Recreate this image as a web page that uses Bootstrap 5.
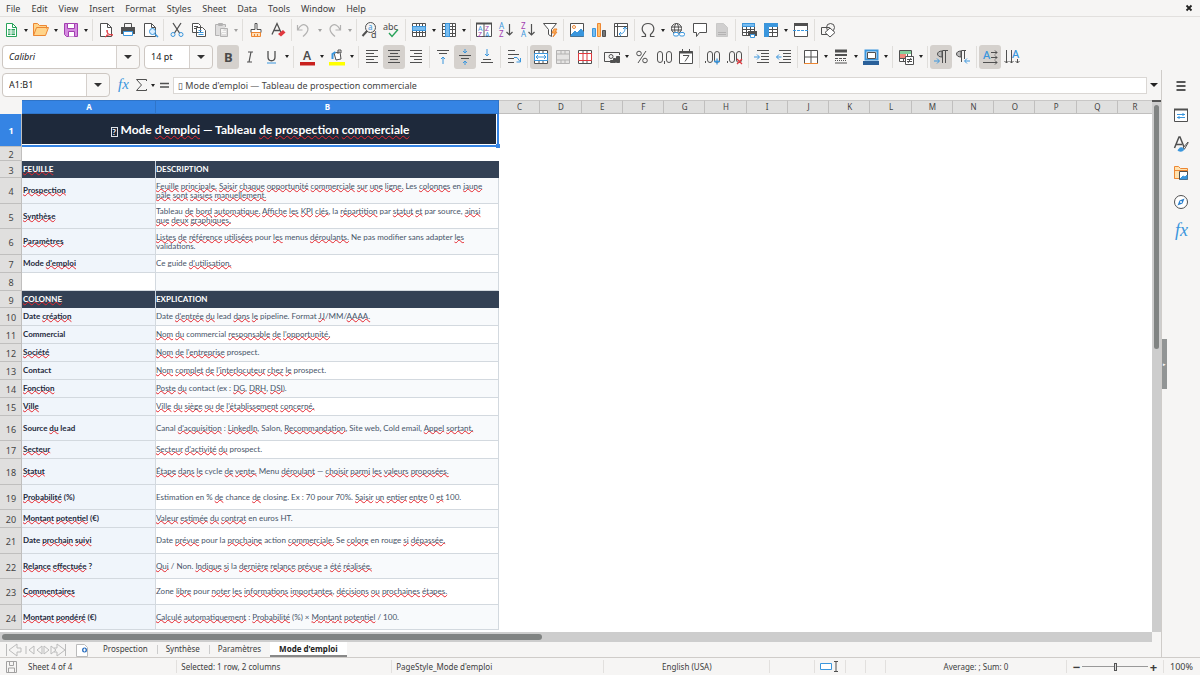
<!DOCTYPE html>
<html lang="en">
<head>
<meta charset="utf-8">
<meta name="viewport" content="width=device-width, initial-scale=1">
<title>Mode d'emploi - Spreadsheet</title>
<link href="https://cdn.jsdelivr.net/npm/bootstrap@5.3.0/dist/css/bootstrap.min.css" rel="stylesheet">
<style>
:root{--ui:#f6f5f4;--line:#e2e0de;--ink:#3d3d3d;--sel:#3584e4;--b:#3a96dd}
body{background:var(--ui);color:var(--ink);font:9px/14px "Noto Sans",sans-serif}
button,input,select{font:inherit;color:inherit}
.menubar{height:16px;line-height:17px;padding-left:6px}
.menubar a{color:inherit;text-decoration:none;margin-right:11px}
.menubar .tool{height:16px}
.menubar .tool svg{height:16px;margin:0}
.toolrow{height:27px}
.standard{border-top:1px solid var(--line)}
.formatting{padding-left:2px;gap:0}
.tool,.dd{border:0;background:none;padding:0;height:24px;flex:none}
.tool{width:22px;border-radius:3px}
.tool.active{background:#d5d1cd}
.tool svg{display:block;width:22px;height:22px;margin:1px 0}
.tool.slim,.tool.slim svg{width:14px}
.tool:disabled,.dd:disabled{opacity:.4}
svg{fill:none;stroke:#505050;stroke-width:1}
svg text{stroke:none;fill:#4a4a4a;font-family:"Noto Sans",sans-serif}
.blue{stroke:var(--b)}.red{stroke:#e0383e}.or{stroke:#ed8733}.gr{stroke:#29a35a}.pu{stroke:#a33fb0}
svg .tb{fill:var(--b)}svg .tp{fill:#a33fb0}
svg .fxglyph{font-family:"Liberation Serif",serif;font-style:italic}
.pale{stroke:#bbb}
.dd{width:8px}
.dd::before,.fold::before{content:"";display:block;width:4px;margin:0 auto;border:2px solid transparent;border-top:3px solid #222;border-bottom:0}
.split{width:1px;height:22px;background:#e0dedb;margin:0 2px;flex:none}
.combo{appearance:none;height:24px;border:1px solid #cdc7c2;border-radius:4px;padding:0 4px 0 6px;color:#222;flex:none;
background:linear-gradient(#d5d0cc,#d5d0cc) right 22px top/1px 100% no-repeat,url("data:image/svg+xml,%3Csvg xmlns='http://www.w3.org/2000/svg' width='22' height='22'%3E%3Cpath d='M7 9h8l-4 4z' fill='%23333'/%3E%3C/svg%3E") right center no-repeat,linear-gradient(90deg,#fff,#fff) left/calc(100% - 23px) 100% no-repeat,#f8f7f6}
.fontbox{width:138px;font-style:italic;margin-right:4px}.sizebox{width:69px;margin-right:4px}.namebox{width:108px;margin-right:3px}
.formula{height:30px;padding-left:2px}
.formula .entry{height:17px;border:1px solid #dad7d4;background:#fff;padding:0 4px;margin-left:2px;min-width:0;outline:0;color:#444}
.fold{border:0;background:none;width:14px;padding:0}
.fold::before{width:8px;border-width:4px 4px 0}
.shrinkable{min-height:0;min-width:0}
.sheet{background:#fff;overflow:hidden;min-height:0}
.cells{table-layout:fixed;width:100%;border-collapse:separate;border-spacing:0;font-family:Lato,sans-serif;font-size:8px;line-height:9px;color:#475569}
.cells th,.cells td{padding:0 0 0 1px;vertical-align:middle;overflow:hidden;white-space:nowrap}
.cells thead th{height:14px;line-height:12px;background:#e0e0df;border-right:1px solid #c0bfbe;border-top:1px solid #c8c7c6;border-bottom:1px solid #c0bfbe;font-family:"Noto Sans",sans-serif;font-size:8px;font-weight:400;text-align:center;color:#444}
.cells thead th.on{background:var(--sel);color:#fff;font-weight:700;border-color:#2f74c8}
.cells thead th:first-child{background:var(--ui);border-color:transparent}
.cells thead th:last-child{border-right:0;padding-left:6px}
.cells .num{background:#e0dfde;border-right:1px solid #c0bfbe;border-bottom:1px solid #c0bfbe;font-family:"Noto Sans",sans-serif;font-size:9px;font-weight:400;text-align:center;color:#444;padding-top:2px}
.cells .num.on{background:var(--sel);color:#fff;font-weight:700;padding-top:0}
.cells .key{background:#f0f5fb;color:#1e293b;font-weight:700}
.cells .key,.cells .note{border-right:1px solid #d3d9df;border-bottom:1px solid #d3d9df}
.cells .note,.cells th:last-child:not(.num){padding-left:0}
.cells tr:nth-child(even) .note{background:#f8fafc}
.cells .band th:not(.num){background:#334155;color:#fff;font-weight:700;border-right:1px solid #cbd5e1}
.cells .band th:last-child{border-right-color:#334155!important}
.cells .title{position:relative;overflow:visible;background:#1e293b;color:#fff;font-size:12px;line-height:15px;font-weight:700;text-align:center;border-bottom:2px solid var(--sel);border-right:2px solid var(--sel);box-shadow:inset 0 -1px #fff,inset -1px 0 #fff}
.cells .title::after{content:"";position:absolute;right:-3px;bottom:-3px;width:4px;height:4px;background:var(--sel)}
.h14{height:14px}.h17{height:17px}.h18{height:18px}.h25{height:25px}.h26{height:26px}.h33{height:33px}
.cells u{text-decoration:underline wavy #e5262e 1px;text-decoration-skip-ink:none;text-underline-offset:-1px}
.cells .title u{text-underline-offset:1px}
.missing{display:inline-block;border:1px solid #dfe3e8;width:7px;height:10px;font-size:8px;line-height:8px;vertical-align:-1px}
.vtrack{width:9px;background:#cdcdcd;flex:none;border-top:2px solid #555}
.vthumb{width:5px;height:46%;margin:3px auto 0;border-radius:3px;background:#808382}
.htrack{height:10px;background:#cdcdcd;margin-right:9px;padding:2px}
.hthumb{width:47%;height:6px;border-radius:3px;background:#808382}
.tabs{height:15px;font-size:8px;line-height:14px}
.tabs .nav-link{padding:0 9px;color:inherit}
.tabs .nav-item+.nav-item{background:linear-gradient(#ccc,#ccc) left center/1px 9px no-repeat}
.tabs .nav-item .active{background:#fff;font-weight:700;color:#222;border-bottom:2px solid #888;height:15px}
.side{width:39px;border-left:1px solid #cfccc9;padding-top:1px}
.side .tool{height:29px}
.side .tool svg{margin:auto}
.grip{position:absolute;left:0;top:269px;width:5px;height:50px;background:#929595;border:0;padding:0;color:#fff;font-size:5px}
.status{height:18px;border-top:1px solid #cfccc9;font-size:8px;display:grid;grid-template-columns:20px 157fr 216fr 213fr 167fr 45fr 31fr 20fr 20fr 182fr auto auto}
.status .cellbox{border-left:1px solid #e2e0de;height:13px;line-height:13px;white-space:nowrap;min-width:0}
.status .percent{font-size:9px;padding:0 7px 0 6px}
.zoomer{appearance:none;height:9px;width:66px;background:linear-gradient(#999,#999) center/100% 1px no-repeat}
.zoomer::-webkit-slider-thumb{appearance:none;width:3px;height:8px;border:1px solid #555;background:#ddd}
.zbtn{border:0;background:none;padding:0;width:11px;font-size:13px;font-weight:700;line-height:12px}
</style>
</head>
<body class="vh-100 d-flex flex-column overflow-hidden">
<nav class="menubar d-flex flex-shrink-0" aria-label="Menu">
<a href="#">File</a><a href="#">Edit</a><a href="#">View</a><a href="#">Insert</a><a href="#">Format</a><a href="#">Styles</a><a href="#">Sheet</a><a href="#">Data</a><a href="#">Tools</a><a href="#">Window</a><a href="#">Help</a>
<button class="tool ms-auto" aria-label="Close document"><svg viewBox="0 0 22 16"><path d="M8.500 5.500l5 5m0-5l-5 5" stroke="#222" stroke-width="1.800"/></svg></button>
</nav>
<div class="toolrow standard d-flex align-items-center flex-shrink-0" role="toolbar" aria-label="Standard">
<button class="tool" aria-label="New"><svg viewBox="0 0 22 22"><path class="gr" d="M6.500 4.500h6l4 4v9h-10z" fill="#fff"/><path class="gr" d="M12.500 4.500v4h4"/><path d="M8 10h7v6H8z" fill="#29a35a" stroke="none"/><path d="M8 12h7M8 14h7M11 10v6" stroke="#fff"/></svg></button><button class="dd" aria-label="New options"></button>
<button class="tool" aria-label="Open"><svg viewBox="0 0 22 22"><path class="or" d="M3.500 16.500v-12h4l2 2h7v3M3.500 16.500l3-8h12l-3 8z" fill="#ffd48a"/></svg></button><button class="dd" aria-label="Open options"></button>
<button class="tool" aria-label="Save"><svg viewBox="0 0 22 22"><path class="pu" d="M4.500 4.500h13v13h-11l-2-2z" fill="#d58be0"/><path class="pu" d="M7.500 4.500h7v5h-7zM8.500 17.500v-5h6v5" fill="#fff"/></svg></button><button class="dd" aria-label="Save options"></button><i class="split"></i>
<button class="tool" aria-label="Export as PDF"><svg viewBox="0 0 22 22"><path d="M5.500 4.500h7l4 4v9h-11z" fill="#fff"/><path d="M12.500 4.500v4h4"/><path class="red" d="M10 18c3-2 3-5 2-7-1 3 2 5 6 5-3-1-5 0-8 2"/></svg></button>
<button class="tool" aria-label="Print"><svg viewBox="0 0 22 22"><path d="M7.500 8V4.500h7V8"/><path d="M4 8h14v7H4z" fill="#505050" stroke="none"/><path class="blue" d="M6.500 12.500h9v4h-9z" fill="#fff"/></svg></button>
<button class="tool" aria-label="Print preview"><svg viewBox="0 0 22 22"><path d="M5.500 4.500h7l4 4v9h-11z" fill="#fff"/><path d="M12.500 4.500v4h4"/><circle class="blue" cx="13.500" cy="12.500" r="3" fill="#dcefff"/><path class="blue" d="M16 15l3 3" stroke-width="1.500"/></svg></button><i class="split"></i>
<button class="tool" aria-label="Cut"><svg viewBox="0 0 22 22"><path d="M7 4l6.500 10M15 4L8.500 14" stroke-width="1.300"/><circle class="blue" cx="7" cy="15.500" r="2"/><circle class="blue" cx="15" cy="15.500" r="2"/></svg></button>
<button class="tool" aria-label="Copy"><svg viewBox="0 0 22 22"><path d="M4.500 4.500h6l2 2v7h-8zM8.500 8.500h6l3 3v6h-9z" fill="#fff"/><path d="M6 7.500h4M6 9.500h2"/><path class="blue" d="M10.500 11.500h3M10.500 13.500h5M10.500 15.500h5"/></svg></button>
<button class="tool" aria-label="Paste" disabled><svg viewBox="0 0 22 22"><path d="M15.500 8V5.500h-10v11h4M8.500 4.500h4v2h-4zM10.500 9.500h7v8h-7z" fill="#bbb"/><path d="M12 12.500h4M12 14.500h4" stroke="#fff"/></svg></button><button class="dd" aria-label="Paste options" disabled></button><i class="split"></i>
<button class="tool" aria-label="Clone formatting"><svg viewBox="0 0 22 22"><path d="M10 4.500h2v6h4v3H6v-3h4z" fill="#fff"/><path class="or" d="M6.500 13.500h9v4h-9z" fill="#ffe0bb"/><path class="or" d="M9.500 15v2M12.500 15v2"/></svg></button>
<button class="tool" aria-label="Clear formatting"><svg viewBox="0 0 22 22"><path d="M5 15.500l5-11 4 9M7 11.500h6" stroke-width="1.300"/><path d="M11 15l5-4 2.500 2.500-4.500 4z" fill="#e0383e" stroke="none"/></svg></button><i class="split"></i>
<button class="tool" aria-label="Undo" disabled><svg viewBox="0 0 22 22"><path d="M3.500 6v5h5M4 10.500c2-4 5-6 8-4s3 6-3 11" stroke-width="1.200"/></svg></button><button class="dd" aria-label="Undo list" disabled></button>
<button class="tool" aria-label="Redo" disabled><svg viewBox="0 0 22 22"><path d="M16.500 6v5h-5M16 10.500c-2-4-5-6-8-4s-3 6 3 11" stroke-width="1.200"/></svg></button><button class="dd" aria-label="Redo list" disabled></button><i class="split"></i>
<button class="tool" aria-label="Find and replace"><svg viewBox="0 0 22 22"><circle cx="11.500" cy="8.500" r="5"/><path d="M8 12l-4.500 5" stroke-width="2"/><text class="tb" x="9" y="11" font-size="8">a</text><text x="12" y="19" font-size="9">d</text></svg></button>
<button class="tool" aria-label="Spelling"><svg viewBox="0 0 22 22"><text x="2" y="11" font-size="9">abc</text><path class="gr" d="M8 14l3 3.500 6-7" stroke-width="1.400"/></svg></button><i class="split"></i>
<button class="tool" aria-label="Row"><svg viewBox="0 0 22 22"><path d="M4.500 4.500h13v13h-13zM4 13.500h14M8.500 4v14M11.500 4v14M14.500 4v14" fill="#fff"/><path class="blue" d="M4.500 7.500h13v4h-13z" fill="#79bdf0"/></svg></button><button class="dd" aria-label="Row options"></button>
<button class="tool" aria-label="Column"><svg viewBox="0 0 22 22"><path d="M4.500 4.500h13v13h-13zM4 7.500h14M4 10.500h14M4 14.500h14M14.500 4v14" fill="#fff"/><path class="blue" d="M7.500 4.500h4v13h-4z" fill="#79bdf0"/></svg></button><button class="dd" aria-label="Column options"></button><i class="split"></i>
<button class="tool" aria-label="Sort"><svg viewBox="0 0 22 22"><path d="M3.500 4.500h15v13h-15zM11 5v13" fill="#fff"/><path d="M3 4.500h16" stroke-width="2"/><text class="tb" x="5" y="12" font-size="7">A</text><text class="tp" x="5" y="18" font-size="7">Z</text><text class="tp" x="12" y="12" font-size="7">Z</text><text class="tb" x="12" y="18" font-size="7">A</text></svg></button>
<button class="tool" aria-label="Sort ascending"><svg viewBox="0 0 22 22"><text class="tb" x="4" y="10" font-size="8">A</text><text class="tp" x="4" y="18" font-size="8">Z</text><path d="M14.500 5v11M11.500 13l3 3 3-3" stroke-width="1.200"/></svg></button>
<button class="tool" aria-label="Sort descending"><svg viewBox="0 0 22 22"><text class="tp" x="4" y="10" font-size="8">Z</text><text class="tb" x="4" y="18" font-size="8">A</text><path d="M14.500 5v11M11.500 13l3 3 3-3" stroke-width="1.200"/></svg></button>
<button class="tool" aria-label="AutoFilter"><svg viewBox="0 0 22 22"><path d="M4.500 4.500h13l-5 6v7l-3-2v-5z" fill="#fff"/><path class="or" d="M15 10l-2 4h3l-2 4 4-5h-2l2-3z" fill="#ffb35c"/></svg></button><i class="split"></i>
<button class="tool" aria-label="Insert image"><svg viewBox="0 0 22 22"><path d="M4.500 4.500h13v13h-13z" fill="#fff"/><circle class="or" cx="8" cy="8" r="1.500"/><path class="blue" d="M5 16l4-4 2 2 4-4 2.500 3v4H5z" fill="#3a96dd"/></svg></button>
<button class="tool" aria-label="Insert chart"><svg viewBox="0 0 22 22"><path class="blue" d="M4.500 9.500h3v8h-3z" fill="#79bdf0"/><path class="or" d="M9.500 4.500h3v13h-3z" fill="#ffc06e"/><path d="M14.500 11.500h3v6h-3z" fill="#777"/></svg></button>
<button class="tool" aria-label="Pivot table"><svg viewBox="0 0 22 22"><path d="M4.500 4.500h13v13h-13zM4 7.500h14M7.500 4v14" fill="#fff"/><path class="blue" d="M9 15c4 0 6-2 6-6M13 10l2-2 2 2M11 13l-2 2 2 2"/></svg></button><i class="split"></i>
<button class="tool" aria-label="Special character"><svg viewBox="0 0 22 22"><path d="M4.500 17.500h4v-2c-6-5-3-11 2.500-11s8.500 6 2.500 11v2h4" stroke-width="1.200"/></svg></button><button class="dd" aria-label="Character options"></button>
<button class="tool" aria-label="Hyperlink"><svg viewBox="0 0 22 22"><circle cx="9.500" cy="9.500" r="5"/><ellipse cx="9.500" cy="9.500" rx="2" ry="5"/><path d="M4 8h11M4 11h11"/><rect class="blue" x="6.500" y="13.500" width="5" height="3.500" rx="1.500" fill="#fff"/><rect class="blue" x="12.500" y="13.500" width="5" height="3.500" rx="1.500" fill="#fff"/></svg></button>
<button class="tool" aria-label="Comment"><svg viewBox="0 0 22 22"><path d="M4.500 4.500h13v9h-7l-3 4v-4h-3z" fill="#fff"/></svg></button>
<button class="tool" aria-label="Headers and footers" disabled><svg viewBox="0 0 22 22"><path d="M5.500 4.500h7l4 4v9h-11z" fill="#999" stroke="#888"/><path d="M7 13.500h8M7 15.500h8"/></svg></button><i class="split"></i>
<button class="tool" aria-label="Print area"><svg viewBox="0 0 22 22"><path d="M4.500 4.500h12v12h-12zM4 10.500h13M4 13.500h13M8.500 4v13M12.500 4v13" fill="#fff"/><path class="blue" d="M4.500 4.500h12v3h-12z" fill="#79bdf0"/><path d="M10 12h9v5h-9z" fill="#505050" stroke="none"/><path class="blue" d="M12.500 15.500h4v3h-4z" fill="#fff"/></svg></button>
<button class="tool" aria-label="Freeze"><svg viewBox="0 0 22 22"><path d="M4.500 4.500h13v13h-13zM4 10.500h14M4 13.500h14M12.500 4v14" fill="#fff"/><path class="blue" d="M4.500 4.500h13v3h-9v10h-4z" fill="#3a96dd"/></svg></button><button class="dd" aria-label="Freeze options"></button>
<button class="tool" aria-label="Split window"><svg viewBox="0 0 22 22"><path d="M4.500 5.500h13v12h-13z" fill="#fff"/><path d="M4 5.500h14" stroke-width="3"/><path class="blue" d="M3 11.500h16" stroke-dasharray="3 1"/></svg></button><i class="split"></i>
<button class="tool" aria-label="Draw functions"><svg viewBox="0 0 22 22"><path d="M4.500 8.500h8v7h-8z"/><circle cx="13.500" cy="8.500" r="4"/><path d="M13 9l5 4.500-5 4.500-5-4.500z" fill="#fff"/></svg></button>
</div>
<div class="toolrow formatting d-flex align-items-center flex-shrink-0" role="toolbar" aria-label="Formatting">
<select class="combo fontbox" aria-label="Font name"><option>Calibri</option></select>
<select class="combo sizebox" aria-label="Font size"><option>14 pt</option></select>
<button class="tool active" aria-label="Bold"><svg viewBox="0 0 22 22"><text x="7" y="16" font-size="13" font-weight="700">B</text></svg></button>
<button class="tool" aria-label="Italic"><svg viewBox="0 0 22 22"><path d="M9 6h5M8 16h5M12 6l-2 10" stroke-width="1.200"/></svg></button>
<button class="tool" aria-label="Underline"><svg viewBox="0 0 22 22"><path d="M7 5v6c0 5 7 5 7 0V5" stroke-width="1.300"/><path class="blue" d="M6 17h9"/></svg></button><button class="dd" aria-label="Underline options"></button><i class="split"></i>
<button class="tool" aria-label="Font color"><svg viewBox="0 0 22 22"><text x="7" y="14" font-size="12" font-weight="600">A</text><path d="M4 16h15v3.500H4z" fill="#c9211e" stroke="none"/></svg></button><button class="dd" aria-label="Font colors"></button>
<button class="tool" aria-label="Highlighting"><svg viewBox="0 0 22 22"><path d="M8 7l6-1 1 7-5 1z" fill="#fff"/><path class="blue" d="M6.500 13v-5l3-2" stroke-width="2"/><path d="M12 8V4h3v3"/><path d="M3 16h16v3.500H3z" fill="#ff0" stroke="none"/></svg></button><button class="dd" aria-label="Highlight colors"></button><i class="split"></i>
<button class="tool" aria-label="Align left"><svg viewBox="0 0 22 22"><path d="M5 4.500h12M5 7.500h8M5 10.500h12M5 13.500h8M5 16.500h12"/></svg></button>
<button class="tool active" aria-label="Center"><svg viewBox="0 0 22 22"><path d="M5 4.500h12M7 7.500h8M5 10.500h12M7 13.500h8M5 16.500h12"/></svg></button>
<button class="tool" aria-label="Align right"><svg viewBox="0 0 22 22"><path d="M5 4.500h12M9 7.500h8M5 10.500h12M9 13.500h8M5 16.500h12"/></svg></button><i class="split"></i>
<button class="tool" aria-label="Align top"><svg viewBox="0 0 22 22"><path d="M5 4.500h12M7 7.500h8"/><path class="blue" d="M11 18v-7M9 13l2-2 2 2"/></svg></button>
<button class="tool active" aria-label="Center vertically"><svg viewBox="0 0 22 22"><path d="M5 9.500h12M7 12.500h8"/><path class="blue" d="M11 3v4M9 5l2 2 2-2M11 19v-4M9 17l2-2 2 2"/></svg></button>
<button class="tool" aria-label="Align bottom"><svg viewBox="0 0 22 22"><path d="M7 13.500h8M5 16.500h12"/><path class="blue" d="M11 3v7M9 8l2 2 2-2"/></svg></button><i class="split"></i>
<button class="tool" aria-label="Wrap text"><svg viewBox="0 0 22 22"><path d="M5 4.500h7M5 8.500h11M5 12.500h6M5 16.500h6"/><path class="blue" d="M11 11.500h3l3 4M17.500 12v4h-4"/></svg></button><i class="split"></i>
<button class="tool active" aria-label="Merge and center"><svg viewBox="0 0 22 22"><path d="M4.500 4.500h13v13h-13zM9 4v4M13 4v4M9 14v4M13 14v4" fill="#fff"/><path class="blue" d="M4.500 7.500h13v7h-13zM6 11h10M8 9l-2 2 2 2M14 9l2 2-2 2" fill="#fff"/></svg></button>
<button class="tool" aria-label="Merge cells" disabled><svg viewBox="0 0 22 22"><path d="M4.500 4.500h13v13h-13zM4 8h14M4 14h14M9 4v4M13 4v4M9 14v4M13 14v4" fill="#ccc"/></svg></button>
<button class="tool" aria-label="Unmerge cells"><svg viewBox="0 0 22 22"><path d="M4.500 4.500h13v13h-13zM9 4v4M13 4v4M9 14v4M13 14v4" fill="#fff"/><path class="red" d="M4.500 7.500h13v7h-13zM9 8v7M13 8v7" fill="#fff"/></svg></button><i class="split"></i>
<button class="tool" aria-label="Currency"><svg viewBox="0 0 22 22"><path d="M18.500 9V6.500h-15v9h6"/><circle cx="10" cy="10.500" r="2"/><path d="M9.500 16.500v-2h3v2zM12.500 16.500v-4h2v4zM15.500 16.500v-6h3v6z" fill="#505050"/></svg></button><button class="dd" aria-label="Currency options"></button>
<button class="tool" aria-label="Percent"><svg viewBox="0 0 22 22"><circle cx="8" cy="7.500" r="2.300"/><circle cx="14" cy="14.500" r="2.300"/><path d="M15 5L7 17"/></svg></button>
<button class="tool" aria-label="Number"><svg viewBox="0 0 22 22"><rect x="4.500" y="5.500" width="5" height="11" rx="2.500"/><rect x="13.500" y="5.500" width="5" height="11" rx="2.500"/><path d="M11.500 15v3"/></svg></button>
<button class="tool" aria-label="Date"><svg viewBox="0 0 22 22"><path d="M4.500 5.500h13v12h-13zM7.500 3v3M14.500 3v3M8 9.500h6l-4 6" fill="#fff"/><path d="M4 6.500h14" stroke-width="2"/></svg></button><i class="split"></i>
<button class="tool" aria-label="Add decimal place"><svg viewBox="0 0 22 22"><path d="M3.500 15v2"/><rect x="5.500" y="5.500" width="5" height="11" rx="2.500"/><rect x="12.500" y="5.500" width="5" height="11" rx="2.500"/><path class="blue" d="M12 15.500h6M15 12.500v6" stroke-width="1.300"/></svg></button>
<button class="tool" aria-label="Delete decimal place"><svg viewBox="0 0 22 22"><path d="M3.500 15v2"/><rect x="5.500" y="5.500" width="5" height="11" rx="2.500"/><rect x="12.500" y="5.500" width="5" height="11" rx="2.500"/><path class="red" d="M13 13l5 5M18 13l-5 5" stroke-width="1.300"/></svg></button><i class="split"></i>
<button class="tool" aria-label="Increase indent"><svg viewBox="0 0 22 22"><path d="M6 4.500h12M10 7.500h8M10 10.500h8M10 13.500h8M6 16.500h12"/><path class="blue" d="M3 11h5M6 8.500l2.500 2.500L6 13.500"/></svg></button>
<button class="tool" aria-label="Decrease indent"><svg viewBox="0 0 22 22"><path d="M6 4.500h12M10 7.500h8M10 10.500h8M10 13.500h8M6 16.500h12"/><path class="blue" d="M8.500 11h-5M6 8.500L3.500 11 6 13.500"/></svg></button><i class="split"></i>
<button class="tool" aria-label="Borders"><svg viewBox="0 0 22 22"><path d="M4.500 17V4.500h13V17M11 4v13M4 11h14" fill="#fff"/><path class="or" d="M4 17.500h14"/></svg></button><button class="dd" aria-label="Border options"></button>
<button class="tool" aria-label="Border style"><svg viewBox="0 0 22 22"><path d="M5 5h12" stroke-width="3"/><path d="M5 9h12" stroke-width="2"/><path d="M5 12.500h12" stroke-dasharray="3 1"/><path d="M5 14.500h12" stroke-dasharray="1 1"/><path d="M5 17h12"/></svg></button><button class="dd" aria-label="Border styles"></button>
<button class="tool" aria-label="Border color"><svg viewBox="0 0 22 22"><path class="blue" d="M5.500 4.500h12v9h-12z" stroke-width="2"/><path d="M7.500 6.500h8v6h-8z" fill="#fff"/><path d="M3 15h16v4H3z" fill="#2a6099" stroke="none"/></svg></button><button class="dd" aria-label="Border colors"></button><i class="split"></i>
<button class="tool" aria-label="Conditional formatting"><svg viewBox="0 0 22 22"><path d="M4.500 4.500h12v11h-12zM4 12.500h12M8.500 4v12M12.500 4v12" fill="#fff"/><path d="M5 5h11v3H5z" fill="#83cf9c" stroke="none"/><path d="M5 8h6v4H5z" fill="#f08a7c" stroke="none"/><path d="M10.500 10.500h8v8h-8zM12 13.500h5M12 15.500h5M16 12l-3 5" fill="#fff"/></svg></button><button class="dd" aria-label="Conditional options"></button><i class="split"></i>
<button class="tool active" aria-label="Left-to-right"><svg viewBox="0 0 22 22"><path d="M12 5C6 5 6 11 12 11z" fill="#bbb"/><path d="M12.500 17V4.500H18M15.500 4v13"/><path class="blue" d="M4 15h5M7 12.500L9.500 15 7 17.500"/></svg></button>
<button class="tool" aria-label="Right-to-left"><svg viewBox="0 0 22 22"><path d="M9 5C3 5 3 11 9 11z" fill="#bbb"/><path d="M9.500 16V4.500H14M12.500 4v9"/><path class="blue" d="M18 15h-5M15 12.500L12.500 15l2.500 2.500"/></svg></button><i class="split"></i>
<button class="tool active" aria-label="Horizontal text"><svg viewBox="0 0 22 22"><text class="tb" x="4" y="13" font-size="11" font-weight="500">A</text><path d="M12 6.500h6M12 11.500h6M4 16.500h14M16 4.500l2 2-2 2M16 9.500l2 2-2 2M16 14.500l2 2-2 2"/></svg></button>
<button class="tool" aria-label="Vertical text"><svg viewBox="0 0 22 22"><text class="tb" x="11" y="12" font-size="11" font-weight="500">A</text><path d="M5.500 4v13M10.500 4v13M16.500 13v4M3.500 15l2 2 2-2M8.500 15l2 2 2-2M14.500 15l2 2 2-2"/></svg></button>
</div>
<main class="d-flex flex-grow-1 shrinkable">
<div class="d-flex flex-column flex-grow-1 shrinkable">
<div class="formula d-flex align-items-center flex-shrink-0">
<select class="combo namebox" aria-label="Name Box"><option>A1:B1</option></select>
<button class="tool" aria-label="Function wizard"><svg viewBox="0 0 22 22"><text class="tb fxglyph" x="5" y="15" font-size="15">fx</text></svg></button>
<button class="tool slim" aria-label="Sum"><svg viewBox="4 0 14 22"><path d="M15.500 7V5.500h-10l5 5.500-5 5.500h10V15"/></svg></button><button class="dd" aria-label="Sum options"></button>
<button class="tool slim" aria-label="Formula"><svg viewBox="4 0 14 22"><path d="M7 9.500h9M7 13h9" stroke-width="1.500"/></svg></button>
<input class="entry flex-grow-1" aria-label="Input line" value="▯ Mode d'emploi — Tableau de prospection commerciale">
<button class="fold" aria-label="Expand formula bar"></button>
</div>
<div class="d-flex flex-grow-1 shrinkable">
<div class="sheet flex-grow-1">
<table class="cells">
<colgroup><col style="width:22px"><col style="width:134px"><col style="width:343px"><col span="15"><col style="width:34px"></colgroup>
<thead><tr><th></th><th class="on">A</th><th class="on">B</th><th>C</th><th>D</th><th>E</th><th>F</th><th>G</th><th>H</th><th>I</th><th>J</th><th>K</th><th>L</th><th>M</th><th>N</th><th>O</th><th>P</th><th>Q</th><th>R</th></tr></thead>
<tbody>
<tr class="h33"><th class="num on">1</th><td class="title" colspan="2"><span class="missing">?</span> Mode <u>d'emploi</u> — Tableau <u>de</u> <u>prospection</u> <u>commerciale</u></td></tr>
<tr class="h14"><th class="num">2</th><td></td><td></td></tr>
<tr class="h17 band"><th class="num">3</th><th><u>FEUILLE</u></th><th>DESCRIPTION</th></tr>
<tr class="h26"><th class="num">4</th><td class="key"><u>Prospection</u></td><td class="note"><u>Feuille</u> <u>principale.</u> <u>Saisir</u> <u>chaque</u> <u>opportunité</u> <u>commerciale</u> <u>sur</u> <u>une</u> <u>ligne.</u> Les <u>colonnes</u> en <u>jaune</u><br><u>pâle</u> <u>sont</u> <u>saisies</u> <u>manuellement.</u></td></tr>
<tr class="h25"><th class="num">5</th><td class="key"><u>Synthèse</u></td><td class="note">Tableau <u>de</u> <u>bord</u> <u>automatique.</u> <u>Affiche</u> <u>les</u> <u>KPI</u> <u>clés</u>, la <u>répartition</u> par <u>statut</u> <u>et</u> par source, <u>ainsi</u><br><u>que</u> <u>deux</u> <u>graphiques.</u></td></tr>
<tr class="h26"><th class="num">6</th><td class="key"><u>Paramètres</u></td><td class="note"><u>Listes</u> <u>de</u> <u>référence</u> <u>utilisées</u> pour <u>les</u> menus <u>déroulants.</u> Ne pas modifier sans adapter <u>les</u><br>validations.</td></tr>
<tr class="h18"><th class="num">7</th><td class="key">Mode <u>d'emploi</u></td><td class="note">Ce guide <u>d'utilisation.</u></td></tr>
<tr class="h18"><th class="num">8</th><td class="key bg-white"></td><td class="note"></td></tr>
<tr class="h17 band"><th class="num">9</th><th><u>COLONNE</u></th><th>EXPLICATION</th></tr>
<tr class="h18"><th class="num">10</th><td class="key">Date <u>création</u></td><td class="note">Date <u>d'entrée</u> <u>du</u> lead <u>dans</u> <u>le</u> pipeline. Format <u>JJ</u>/MM/<u>AAAA.</u></td></tr>
<tr class="h18"><th class="num">11</th><td class="key">Commercial</td><td class="note"><u>Nom</u> <u>du</u> commercial <u>responsable</u> <u>de</u> <u>l'opportunité.</u></td></tr>
<tr class="h18"><th class="num">12</th><td class="key"><u>Société</u></td><td class="note"><u>Nom</u> <u>de</u> <u>l'entreprise</u> prospect.</td></tr>
<tr class="h18"><th class="num">13</th><td class="key">Contact</td><td class="note"><u>Nom</u> <u>complet</u> <u>de</u> <u>l'interlocuteur</u> <u>chez</u> <u>le</u> prospect.</td></tr>
<tr class="h18"><th class="num">14</th><td class="key"><u>Fonction</u></td><td class="note"><u>Poste</u> <u>du</u> contact (ex : <u>DG</u>, <u>DRH</u>, <u>DSI</u>).</td></tr>
<tr class="h18"><th class="num">15</th><td class="key"><u>Ville</u></td><td class="note"><u>Ville</u> <u>du</u> <u>siège</u> <u>ou</u> <u>de</u> <u>l'établissement</u> <u>concerné.</u></td></tr>
<tr class="h25"><th class="num">16</th><td class="key">Source <u>du</u> lead</td><td class="note">Canal <u>d'acquisition</u> : <u>LinkedIn</u>, Salon, <u>Recommandation</u>, Site web, Cold email, <u>Appel</u> <u>sortant.</u></td></tr>
<tr class="h18"><th class="num">17</th><td class="key"><u>Secteur</u></td><td class="note"><u>Secteur</u> <u>d'activité</u> <u>du</u> prospect.</td></tr>
<tr class="h26"><th class="num">18</th><td class="key"><u>Statut</u></td><td class="note"><u>Étape</u> <u>dans</u> <u>le</u> cycle <u>de</u> <u>vente.</u> Menu <u>déroulant</u> — <u>choisir</u> <u>parmi</u> <u>les</u> <u>valeurs</u> <u>proposées.</u></td></tr>
<tr class="h25"><th class="num">19</th><td class="key"><u>Probabilité</u> (%)</td><td class="note">Estimation en % <u>de</u> chance <u>de</u> closing. Ex : 70 pour 70%. <u>Saisir</u> <u>un</u> <u>entier</u> <u>entre</u> 0 <u>et</u> 100.</td></tr>
<tr class="h18"><th class="num">20</th><td class="key"><u>Montant</u> <u>potentiel</u> (€)</td><td class="note"><u>Valeur</u> <u>estimée</u> <u>du</u> <u>contrat</u> en euros HT.</td></tr>
<tr class="h26"><th class="num">21</th><td class="key">Date <u>prochain</u> <u>suivi</u></td><td class="note">Date <u>prévue</u> pour la <u>prochaine</u> action <u>commerciale.</u> Se <u>colore</u> en rouge <u>si</u> <u>dépassée.</u></td></tr>
<tr class="h25"><th class="num">22</th><td class="key"><u>Relance</u> <u>effectuée</u> ?</td><td class="note"><u>Oui</u> / Non. <u>Indique</u> <u>si</u> la <u>dernière</u> <u>relance</u> <u>prévue</u> a <u>été</u> <u>réalisée.</u></td></tr>
<tr class="h26"><th class="num">23</th><td class="key"><u>Commentaires</u></td><td class="note">Zone <u>libre</u> pour <u>noter</u> <u>les</u> <u>informations</u> <u>importantes</u>, <u>décisions</u> <u>ou</u> <u>prochaines</u> <u>étapes.</u></td></tr>
<tr class="h25"><th class="num">24</th><td class="key"><u>Montant</u> <u>pondéré</u> (€)</td><td class="note"><u>Calculé</u> <u>automatiquement</u> : <u>Probabilité</u> (%) × <u>Montant</u> <u>potentiel</u> / 100.</td></tr>
</tbody>
</table>
</div>
<div class="vtrack"><div class="vthumb"></div></div>
</div>
<div class="htrack flex-shrink-0"><div class="hthumb"></div></div>
<div class="tabs d-flex flex-shrink-0">
<button class="border-0 bg-transparent p-0 ms-1" disabled aria-label="Scroll sheets"><svg class="pale d-block" width="64" height="14" viewBox="0 0 64 14"><path d="M2.500 1v12M13 1L5 7l8 6V9h4V5h-4zM22 3v8M30 3l-5 4 5 4zM38 3l-5 4 5 4zM40 3l5 4-5 4zM47 3l5 4-5 4zM50 5h3V1l8 6-8 6V9h-3M61.500 1v12"/></svg></button>
<button class="border-0 bg-transparent p-0 ms-2 me-1" aria-label="Add sheet"><svg class="d-block" width="14" height="14" viewBox="0 0 14 14"><path class="pale" d="M.5 1.500h8l3 3v9H.500z" fill="#fff"/><circle cx="8.500" cy="7" r="2.500" fill="#2a6fc0" stroke="none"/><path d="M7 7h3M8.500 5.500v3" stroke="#fff"/></svg></button>
<ul class="nav flex-nowrap"><li class="nav-item"><a class="nav-link" href="#">Prospection</a></li><li class="nav-item"><a class="nav-link" href="#">Synthèse</a></li><li class="nav-item"><a class="nav-link" href="#">Paramètres</a></li><li class="nav-item"><a class="nav-link active" href="#">Mode d'emploi</a></li></ul>
</div>
</div>
<aside class="side d-flex flex-column align-items-center position-relative flex-shrink-0" aria-label="Sidebar">
<button class="tool" aria-label="Sidebar settings"><svg viewBox="0 0 22 22"><path d="M6.500 7h9M6.500 11h9M6.500 15h9" stroke="#222" stroke-width="1.300"/></svg></button>
<button class="tool" aria-label="Properties"><svg viewBox="0 0 22 22"><path d="M4.500 5.500h13v12h-13z" fill="#fff"/><path d="M4 5.500h14" stroke-width="2"/><path class="blue" d="M7 10.500h8M7 13.500h8M13 9v3M9 12v3"/></svg></button>
<button class="tool" aria-label="Styles"><svg viewBox="0 0 22 22"><path d="M4.500 15l4.500-11h1l4 10M6 11.500h6" stroke-width="1.500"/><path d="M18 9l-5 6 1.500 1L18 10z" fill="#fff"/><path class="blue" d="M8 17.500c1-3 4-4 6-1-1 2-4 2-6 1z" fill="#3a96dd"/></svg></button>
<button class="tool" aria-label="Gallery"><svg viewBox="0 0 22 22"><path class="or" d="M4.500 16.500v-12h4l2 2h7v3M4.500 8.500h13v8h-13z" fill="#ffe2b0"/><path d="M9.500 9.500h8v8h-8z" fill="#fff"/><path class="blue" d="M10 17l3-3 2 1 2-2v4z" fill="#3a96dd"/></svg></button>
<button class="tool" aria-label="Navigator"><svg viewBox="0 0 22 22"><circle cx="11" cy="11" r="6.500" fill="#fff"/><path d="M14.500 7.500l-2 5-5 2 2-5z" fill="#2a7fcc" stroke="none"/><circle cx="11" cy="11" r="1" fill="#fff" stroke="none"/></svg></button>
<button class="tool" aria-label="Functions"><svg viewBox="0 0 22 22"><text class="tb fxglyph" x="5" y="16" font-size="18">fx</text></svg></button>
<button class="grip" aria-label="Hide sidebar">▸</button>
</aside>
</main>
<footer class="status align-items-center flex-shrink-0">
<svg class="ms-1 opacity-50" width="16" height="14" viewBox="0 0 16 14"><path d="M2.500 1.500h10v11h-10zM5.500 1.500h4v4h-4zM4.500 12v-4h6v4"/></svg>
<div class="ps-2">Sheet 4 of 4</div>
<div class="cellbox ps-1">Selected: 1 row, 2 columns</div>
<div class="cellbox ps-1">PageStyle_Mode d'emploi</div>
<div class="cellbox text-center">English (USA)</div>
<div class="cellbox"></div>
<div class="cellbox ps-1"><svg class="d-block" width="24" height="13" viewBox="0 0 24 13"><path class="blue" d="M1.500 3.500h11v6h-11z" fill="#fff"/><path d="M15 1.500h4M15 11.500h4M17 1.500v10"/></svg></div>
<div class="cellbox"></div><div class="cellbox"></div>
<div class="cellbox text-center">Average: ; Sum: 0</div>
<div class="cellbox d-flex align-items-center px-1"><button class="zbtn" aria-label="Zoom out">−</button><input class="zoomer" type="range" aria-label="Zoom"><button class="zbtn" aria-label="Zoom in">+</button></div>
<div class="cellbox percent">100%</div>
</footer>
<script src="https://cdn.jsdelivr.net/npm/bootstrap@5.3.0/dist/js/bootstrap.bundle.min.js"></script>
</body>
</html>
